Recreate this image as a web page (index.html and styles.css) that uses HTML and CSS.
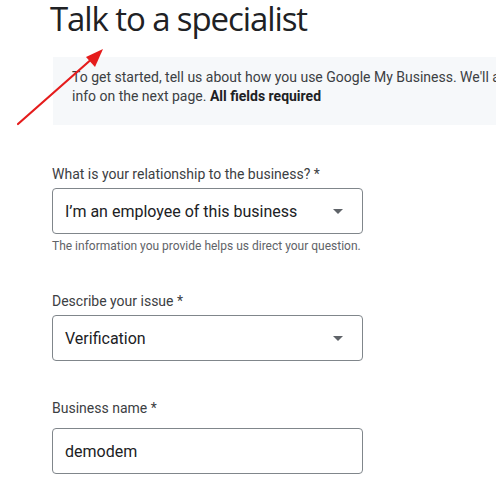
FILE: index.html
```html
<!DOCTYPE html>
<html lang="en">
<head>
  <meta charset="UTF-8">
  <meta name="viewport" content="width=device-width, initial-scale=1.0">
  <title>Talk to a specialist</title>
  <link rel="stylesheet" href="styles.css">
</head>
<body>
  <div class="page">
    <h1 class="title">Talk to a specialist</h1>

    <div class="intro">
      To get started, tell us about how you use Google My Business. We'll also ask for your contact<br>
      info on the next page. <b>All fields required</b>
    </div>

    <form class="form">
      <div class="field">
        <label class="label">What is your relationship to the business? *</label>
        <div class="box select">
          <span>I’m an employee of this business</span>
          <span class="caret"></span>
        </div>
        <div class="hint">The information you provide helps us direct your question.</div>
      </div>

      <div class="field">
        <label class="label">Describe your issue *</label>
        <div class="box select">
          <span>Verification</span>
          <span class="caret"></span>
        </div>
      </div>

      <div class="field">
        <label class="label label-text">Business name *</label>
        <div class="box">
          <span>demodem</span>
        </div>
      </div>
    </form>
  </div>

  <!-- annotation arrow -->
  <svg class="arrow" width="120" height="140" viewBox="0 0 120 140">
    <line x1="18" y1="124" x2="94" y2="57" stroke="#e51c1c" stroke-width="2.2" stroke-linecap="round"/>
    <polygon points="103,49 86,57 95,67" fill="#e51c1c"/>
  </svg>
</body>
</html>
```

FILE: styles.css
```css
html, body {
  margin: 0;
  overflow: hidden;
  background: #fff;
}
body {
  font-family: Roboto, Arial, sans-serif;
  color: #3c4043;
}
.page {
  width: 700px;
  padding-left: 50px;
}
.title {
  margin: 0;
  font-family: "Open Sans", Roboto, sans-serif;
  font-weight: 400;
  font-size: 33px;
  line-height: 37px;
  color: #202124;
  letter-spacing: -1.1px;
}
.intro {
  margin: 20px 0 0 3px;
  padding: 11px 0 19px 19px;
  background: #f6f8fa;
  font-size: 14px;
  line-height: 19px;
  color: #3c4043;
}
.intro b {
  color: #202124;
  font-weight: 700;
}
.form {
  width: 311px;
  margin: 39px 0 0 2px;
}
.field {
  margin-bottom: 37px;
}
.label {
  display: block;
  font-size: 14px;
  line-height: 20px;
  margin-bottom: 4px;
  color: #3c4043;
}
.label-text {
  margin-bottom: 10px;
}
.box {
  height: 44px;
  border: 1px solid #80868b;
  border-radius: 4px;
  display: flex;
  align-items: center;
  justify-content: space-between;
  padding: 0 19px 0 12px;
  font-size: 16px;
  color: #202124;
}
.caret {
  width: 0;
  height: 0;
  border-left: 5px solid transparent;
  border-right: 5px solid transparent;
  border-top: 5px solid #5f6368;
}
.hint {
  margin-top: 4px;
  font-size: 12px;
  line-height: 16px;
  color: #5f6368;
}
.arrow {
  position: absolute;
  left: 0;
  top: 0;
}
```
